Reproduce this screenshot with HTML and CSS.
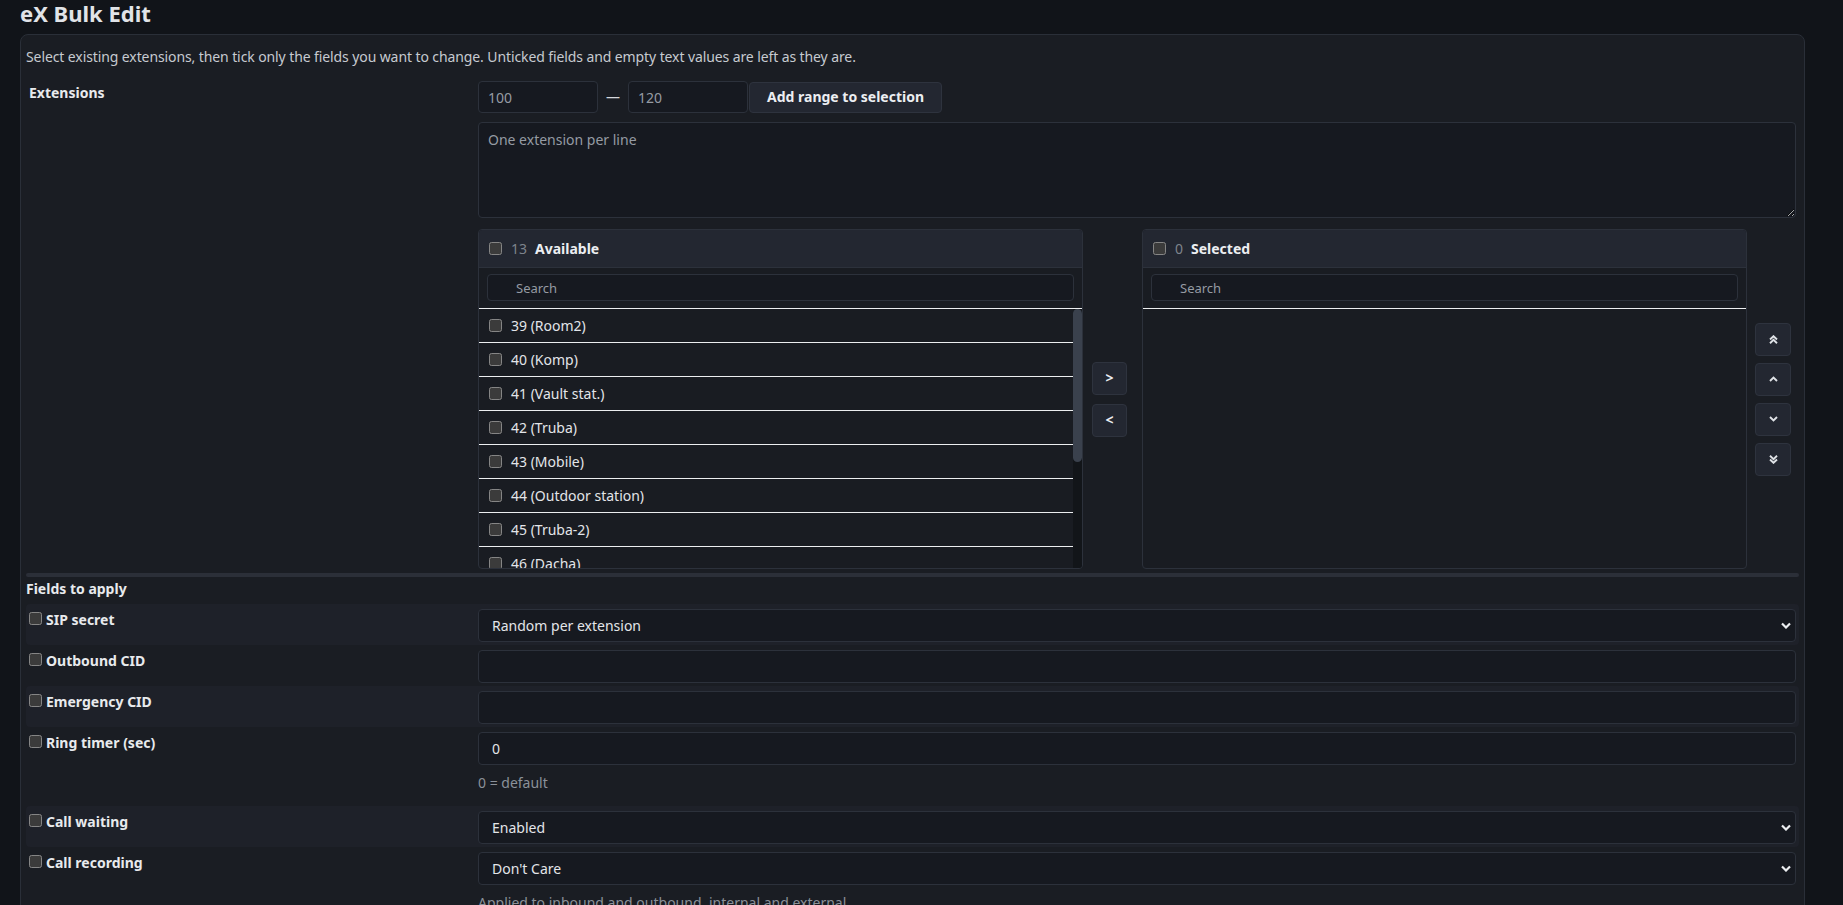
FILE: index.html
```html
<!DOCTYPE html>
<html lang="en">

<head>
  <meta charset="UTF-8" />
  <title>eX Bulk Edit</title>
  <meta name="viewport" content="width=device-width, initial-scale=1.0" />
  <link rel="stylesheet" href="styles.css">
</head>

<body>
  <h2 class="page-title">eX Bulk Edit</h2>

  <div class="panel">
    <p class="intro">Select existing extensions, then tick only the fields you want to change. Unticked fields and empty text values are left as they are.</p>

    <!-- extension picker -->
    <div class="form-row ext-row">
      <div class="row-label"><span>Extensions</span></div>
      <div class="row-control">
        <div class="range-row">
          <input type="text" class="input range-input" placeholder="100">
          <span class="dash">—</span>
          <input type="text" class="input range-input" placeholder="120">
          <button class="btn btn-range">Add range to selection</button>
        </div>
        <textarea class="input ext-text" placeholder="One extension per line"></textarea>

        <div class="dual-list">
          <div class="list-box">
            <div class="list-head">
              <input type="checkbox">
              <span class="count">13</span>
              <span class="list-title">Available</span>
            </div>
            <div class="list-search"><input type="text" class="input search" placeholder="Search"></div>
            <div class="list-body">
              <div class="list-items">
                <label class="item"><input type="checkbox">39 (Room2)</label>
                <label class="item"><input type="checkbox">40 (Komp)</label>
                <label class="item"><input type="checkbox">41 (Vault stat.)</label>
                <label class="item"><input type="checkbox">42 (Truba)</label>
                <label class="item"><input type="checkbox">43 (Mobile)</label>
                <label class="item"><input type="checkbox">44 (Outdoor station)</label>
                <label class="item"><input type="checkbox">45 (Truba-2)</label>
                <label class="item"><input type="checkbox">46 (Dacha)</label>
              </div>
              <!-- scroll position of the list -->
              <div class="scroll-bar"><div class="scroll-thumb"></div></div>
            </div>
          </div>

          <div class="move-btns">
            <button class="btn btn-sq">&gt;</button>
            <button class="btn btn-sq">&lt;</button>
          </div>

          <div class="list-box">
            <div class="list-head">
              <input type="checkbox">
              <span class="count">0</span>
              <span class="list-title">Selected</span>
            </div>
            <div class="list-search"><input type="text" class="input search" placeholder="Search"></div>
            <div class="list-body">
              <div class="list-items"></div>
            </div>
          </div>

          <!-- order buttons -->
          <div class="order-btns">
            <button class="btn btn-sq btn-icon">
              <svg width="9" height="9" viewBox="0 0 9 9"><polyline points="1,4.5 4.5,1.2 8,4.5" /><polyline points="1,8.2 4.5,4.9 8,8.2" /></svg>
            </button>
            <button class="btn btn-sq btn-icon">
              <svg width="9" height="6" viewBox="0 0 9 6"><polyline points="1,5 4.5,1.5 8,5" /></svg>
            </button>
            <button class="btn btn-sq btn-icon">
              <svg width="9" height="6" viewBox="0 0 9 6"><polyline points="1,1 4.5,4.5 8,1" /></svg>
            </button>
            <button class="btn btn-sq btn-icon">
              <svg width="9" height="9" viewBox="0 0 9 9"><polyline points="1,0.8 4.5,4.1 8,0.8" /><polyline points="1,4.5 4.5,7.8 8,4.5" /></svg>
            </button>
          </div>
        </div>
      </div>
    </div>

    <div class="hscroll"></div>

    <h4 class="section-title">Fields to apply</h4>

    <div class="form-row field-row shade">
      <label class="row-label"><input type="checkbox"><span>SIP secret</span></label>
      <div class="row-control">
        <div class="select-wrap">
          <select class="input select">
            <option>Random per extension</option>
          </select>
          <svg class="chev" width="10" height="7" viewBox="0 0 10 7"><polyline points="1,1.5 5,5.5 9,1.5" /></svg>
        </div>
      </div>
    </div>

    <div class="form-row field-row">
      <label class="row-label"><input type="checkbox"><span>Outbound CID</span></label>
      <div class="row-control">
        <input type="text" class="input field-input">
      </div>
    </div>

    <div class="form-row field-row shade">
      <label class="row-label"><input type="checkbox"><span>Emergency CID</span></label>
      <div class="row-control">
        <input type="text" class="input field-input">
      </div>
    </div>

    <div class="form-row field-row">
      <label class="row-label"><input type="checkbox"><span>Ring timer (sec)</span></label>
      <div class="row-control">
        <input type="text" class="input field-input" value="0">
        <div class="help">0 = default</div>
      </div>
    </div>

    <div class="form-row field-row shade">
      <label class="row-label"><input type="checkbox"><span>Call waiting</span></label>
      <div class="row-control">
        <div class="select-wrap">
          <select class="input select">
            <option>Enabled</option>
            <option>Disabled</option>
          </select>
          <svg class="chev" width="10" height="7" viewBox="0 0 10 7"><polyline points="1,1.5 5,5.5 9,1.5" /></svg>
        </div>
      </div>
    </div>

    <div class="form-row field-row">
      <label class="row-label"><input type="checkbox"><span>Call recording</span></label>
      <div class="row-control">
        <div class="select-wrap">
          <select class="input select">
            <option>Don't Care</option>
            <option>Always</option>
            <option>Never</option>
          </select>
          <svg class="chev" width="10" height="7" viewBox="0 0 10 7"><polyline points="1,1.5 5,5.5 9,1.5" /></svg>
        </div>
        <div class="help">Applied to inbound and outbound, internal and external</div>
      </div>
    </div>
  </div>
</body>

</html>
```

FILE: styles.css
```css
html {
  color-scheme: dark;
}

body {
  margin: 0;
  background: #111419;
  color: #e3e5e9;
  font-family: "Noto Sans", "Open Sans", sans-serif;
  font-size: 14px;
  line-height: 20px;
}

.page-title {
  margin: 0 0 8px 20px;
  font-size: 22px;
  line-height: 26px;
  font-weight: 700;
  color: #e1e4e8;
}

.panel {
  margin: 0 38px 0 20px;
  padding: 12px 5px 20px;
  border: 1px solid #2a2f38;
  border-radius: 8px;
  background: #1a1d23;
}

.intro {
  margin: 0 0 14px;
  color: #c6cad0;
  letter-spacing: -0.1px;
}

/* two column rows: label | control */
.form-row {
  display: grid;
  grid-template-columns: 449px 1fr;
  padding: 0 3px;
}

.row-label {
  display: flex;
  align-items: flex-start;
  font-weight: 700;
  color: #e8eaed;
}

.ext-row .row-label {
  padding-top: 2px;
}

.input {
  box-sizing: border-box;
  background: #161920;
  border: 1px solid #2c313b;
  border-radius: 4px;
  color: #e3e5e9;
  font: inherit;
  padding: 5px 9px;
  outline: none;
}

.input::placeholder {
  color: #959ba3;
}

.btn {
  background: #232731;
  border: 1px solid #2e333e;
  border-radius: 4px;
  color: #eceef1;
  font: inherit;
  font-weight: 700;
  cursor: pointer;
}

.range-row {
  display: flex;
  align-items: center;
}

.range-input {
  width: 120px;
  height: 32px;
}

.dash {
  margin: 0 8px;
  color: #d5d8dc;
}

.btn-range {
  height: 31px;
  margin-left: 1px;
  padding: 0 17px;
}

.ext-text {
  display: block;
  width: 100%;
  height: 96px;
  margin-top: 9px;
  padding: 7px 9px;
  resize: vertical;
}

/* dual list */
.dual-list {
  display: grid;
  grid-template-columns: 1fr 59px 1fr 49px;
  height: 340px;
  margin-top: 11px;
}

.list-box {
  display: flex;
  flex-direction: column;
  min-height: 0;
  border: 1px solid #2c313b;
  border-radius: 4px;
  background: #191c22;
  overflow: hidden;
}

.list-head {
  display: flex;
  align-items: center;
  gap: 8px;
  height: 37px;
  padding: 0 10px;
  background: #232731;
  border-bottom: 1px solid #2c313b;
}

.list-head input {
  margin: 0 1px 0 0;
}

.count {
  color: #7e848c;
}

.list-title {
  font-weight: 700;
  color: #eceef1;
}

.list-search {
  padding: 6px 8px 7px;
}

.search {
  width: 100%;
  height: 27px;
  padding: 0 0 0 28px;
  font-size: 13px;
}

.list-body {
  flex: 1;
  display: flex;
  min-height: 0;
  border-top: 1px solid #eceef0;
}

.list-items {
  flex: 1;
  overflow: hidden;
}

.scroll-bar {
  width: 9px;
  background: #121519;
}

.scroll-thumb {
  height: 153px;
  background: #3a414d;
  border-radius: 5px;
}

.item {
  display: flex;
  align-items: center;
  gap: 9px;
  height: 33px;
  padding-left: 10px;
  border-bottom: 1px solid #eceef0;
  color: #e3e5e9;
}

.item input {
  margin: 0;
}

.move-btns,
.order-btns {
  display: flex;
  flex-direction: column;
  justify-content: center;
  align-items: flex-start;
}

.move-btns {
  gap: 9px;
  padding-left: 9px;
}

.order-btns {
  gap: 7px;
  padding-left: 8px;
}

.btn-sq {
  width: 35px;
  height: 33px;
  padding: 0;
}

.btn-icon {
  width: 36px;
  display: flex;
  align-items: center;
  justify-content: center;
}

.btn-icon svg {
  fill: none;
  stroke: #dfe2e6;
  stroke-width: 1.9;
}

.hscroll {
  height: 4px;
  margin-top: 4px;
  background: #2b2f38;
  border-radius: 2px;
}

.section-title {
  margin: 2px 0 5px;
  font-size: 14px;
  line-height: 20px;
  font-weight: 700;
  color: #e8eaed;
}

/* field rows */
.field-row {
  padding: 5px 3px 3px;
  border-radius: 4px;
}

.field-row.shade {
  background: #1e2129;
}

.field-row .row-label {
  padding-top: 1px;
}

.field-row .row-label input {
  margin: 2px 4px 0 0;
}

.field-input,
.select {
  width: 100%;
  height: 33px;
  padding: 0 13px;
}

.select-wrap {
  position: relative;
}

.select {
  appearance: none;
  padding-right: 30px;
}

.chev {
  position: absolute;
  right: 5px;
  top: 13px;
  fill: none;
  stroke: #eceef1;
  stroke-width: 2.2;
  pointer-events: none;
}

.help {
  margin: 8px 0 10px;
  color: #8b9199;
}
```
